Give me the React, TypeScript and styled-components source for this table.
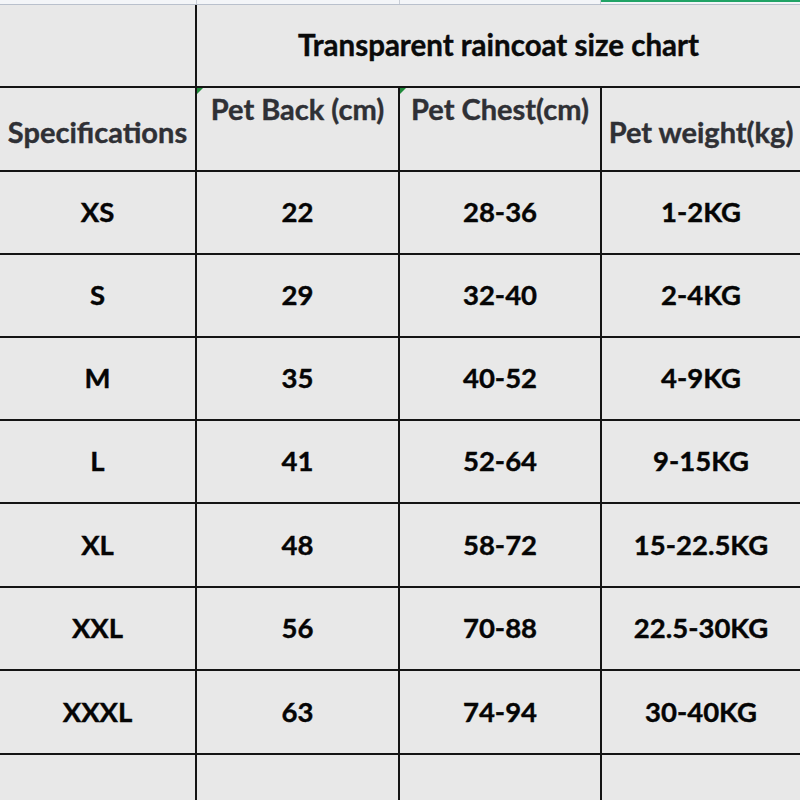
import React from "react";
import styled, { createGlobalStyle } from "styled-components";

const Global = createGlobalStyle`
  html, body { margin: 0; padding: 0; background: #e8e8e8; }
  body { font-family: Lato, "Open Sans", sans-serif; }
`;

const Page = styled.div`
  width: 800px;
  height: 800px;
  overflow: hidden;
  background: #e8e8e8;
  display: flex;
  flex-direction: column;
`;

const TopStrip = styled.div`
  height: 4px;
  flex: 0 0 4px;
  background: #f3f5f8;
  border-bottom: 1px solid #b9c0cc;
  display: grid;
  grid-template-columns: 197px 203px 201px 1fr;
`;

const StripCell = styled.div<{ $green?: boolean }>`
  border-right: 1px solid #c9ced6;
  position: relative;
  ${(p) => (p.$green ? "border-top: 3px solid #21a366; margin-top: -1px; border-right: none;" : "")}
`;

const Grid = styled.div`
  flex: 1;
  display: grid;
  grid-template-columns: 197px 203px 202px 1fr;
  grid-template-rows: 83px 84px 83px 83px 83px 83px 84px 83px 84px 1fr;
`;

const Cell = styled.div<{ $span?: number; $align?: "top" | "center"; $last?: boolean; $bottom?: boolean }>`
  grid-column: span ${(p) => p.$span ?? 1};
  border-bottom: ${(p) => (p.$bottom ? "none" : "2px solid #141414")};
  border-right: ${(p) => (p.$last ? "none" : "2px solid #141414")};
  display: flex;
  justify-content: center;
  align-items: ${(p) => (p.$align === "top" ? "flex-start" : "center")};
  padding-top: ${(p) => (p.$align === "top" ? "3px" : "0")};
  position: relative;
  box-sizing: border-box;
  font-weight: 700;
  color: #000;
  white-space: nowrap;
`;

const Title = styled.span`
  font-size: 29.5px;
  font-weight: 700;
  color: #0a0a0a;
  padding-bottom: 2px;
  -webkit-text-stroke: 0.4px #0a0a0a;
`;

const HeadText = styled.span<{ $shift?: number }>`
  color: #2f3035;
  font-size: 29px;
  font-weight: 700;
  margin-top: ${(p) => p.$shift ?? 0}px;
  -webkit-text-stroke: 0.4px #2f3035;
`;

const DataText = styled.span`
  color: #050505;
  font-size: 27.5px;
  font-weight: 700;
  padding-bottom: 2px;
  -webkit-text-stroke: 0.4px #050505;
`;

const Marker = styled.span`
  position: absolute;
  left: 0;
  top: 0;
  width: 0;
  height: 0;
  border-top: 6px solid #1f8a3a;
  border-right: 6px solid transparent;
`;

const rows = [
  ["XS", "22", "28-36", "1-2KG"],
  ["S", "29", "32-40", "2-4KG"],
  ["M", "35", "40-52", "4-9KG"],
  ["L", "41", "52-64", "9-15KG"],
  ["XL", "48", "58-72", "15-22.5KG"],
  ["XXL", "56", "70-88", "22.5-30KG"],
  ["XXXL", "63", "74-94", "30-40KG"],
];

export default function App() {
  return (
    <Page>
      <Global />
      <TopStrip>
        <StripCell />
        <StripCell />
        <StripCell />
        <StripCell $green />
      </TopStrip>
      <Grid>
        <Cell />
        <Cell $span={3} $last>
          <Title>Transparent raincoat size chart</Title>
        </Cell>

        <Cell>
          <HeadText $shift={4}>Specifications</HeadText>
        </Cell>
        <Cell $align="top">
          <Marker />
          <HeadText>Pet Back (cm)</HeadText>
        </Cell>
        <Cell $align="top">
          <Marker />
          <HeadText>Pet Chest(cm)</HeadText>
        </Cell>
        <Cell $last>
          <HeadText $shift={4}>Pet weight(kg)</HeadText>
        </Cell>

        {rows.map((r) =>
          r.map((v, i) => (
            <Cell key={r[0] + i} $last={i === 3}>
              <DataText>{v}</DataText>
            </Cell>
          ))
        )}

        <Cell $bottom />
        <Cell $bottom />
        <Cell $bottom />
        <Cell $bottom $last />
      </Grid>
    </Page>
  );
}
